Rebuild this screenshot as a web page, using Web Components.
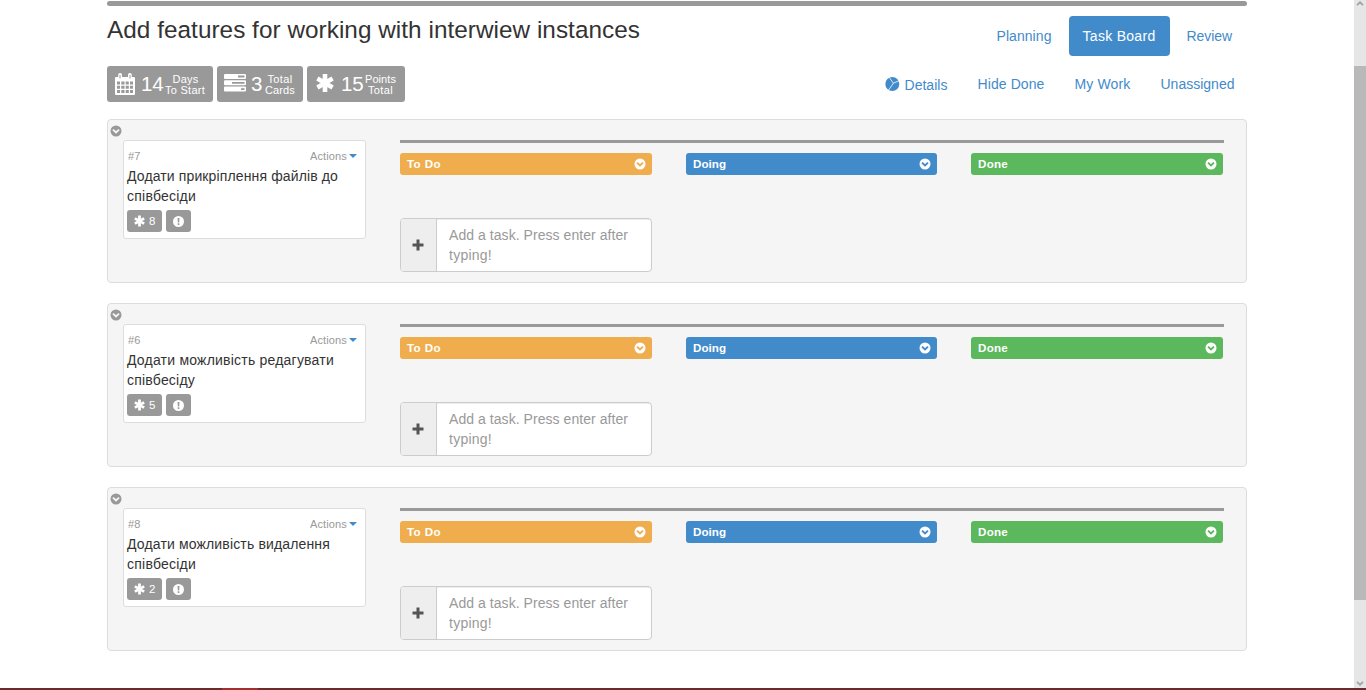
<!DOCTYPE html>
<html lang="uk">
<head>
<meta charset="utf-8">
<title>Task Board</title>
<style>
html,body{margin:0;padding:0;height:690px;overflow:hidden;background:#fff}
body{font:14px/20px "Liberation Sans",Arial,sans-serif;color:#333}
</style>
</head>
<body>
<task-app></task-app>
<script>
const define = (name, html, setup) => customElements.define(name, class extends HTMLElement {
  connectedCallback() {
    if (this.shadowRoot) return;
    this.attachShadow({mode: 'open'}).innerHTML = typeof html === 'function' ? html(this) : html;
    if (setup) setup(this);
  }
});

// Tracks its text to a given line width.
define('fit-text', '<style>:host{display:inline-block;white-space:pre;vertical-align:top}</style><slot></slot>', el => {
  const want = +el.getAttribute('w');
  const natural = el.getBoundingClientRect().width;
  const n = el.textContent.length;
  el.style.letterSpacing = ((want - natural) / n).toFixed(3) + 'px';
  el.style.width = want + 'px';
});

const icons = {
  calendar: ['20 22', '<path fill="#fff" d="M1 4h2.2V2a1.9 1.9 0 0 1 3.8 0v2h6V2a1.9 1.9 0 0 1 3.8 0v2H19q1 0 1 1v16q0 1-1 1H1q-1 0-1-1V5q0-1 1-1z"/><path stroke="#999" stroke-width="1" fill="none" d="M5 2v3.5M15 2v3.5"/><path fill="#999" d="M2 8.5h3v3H2zm4.3 0h3.2v3H6.3zm4.4 0h3.1v3h-3.1zm4.3 0h3v3h-3zM2 12.7h3v3H2zm4.3 0h3.2v3H6.3zm4.4 0h3.1v3h-3.1zm4.3 0h3v3h-3zM2 17h3v3H2zm4.3 0h3.2v3H6.3zm4.4 0h3.1v3h-3.1zm4.3 0h3v3h-3z"/>'],
  tasks: ['22 18', '<path fill="#fff" d="M1 0h20q1 0 1 1v3q0 1-1 1H1q-1 0-1-1V1q0-1 1-1zM1 6.3h20q1 0 1 1v3q0 1-1 1H1q-1 0-1-1v-3q0-1 1-1zM1 12.6h20q1 0 1 1v3q0 1-1 1H1q-1 0-1-1v-3q0-1 1-1z"/><path fill="#999" d="M14 1.6h6.5v1.8H14zM8 7.9h12.5v1.8H8zM17 14.2h3.5V16H17z"/>'],
  asterisk: ['18 20', '<path stroke="currentColor" stroke-width="4.6" fill="none" stroke-linejoin="round" d="M9 1v18M1.4 5.6l15.2 8.8M16.6 5.6L1.4 14.4"/>'],
  chevron: ['12 12', '<circle cx="6" cy="6" r="5.5" fill="currentColor"/><path d="M3 4.6L6 7.4l3-2.8" fill="none" stroke="var(--cut)" stroke-width="1.9"/>'],
  alert: ['12 12', '<circle cx="6" cy="6" r="6" fill="currentColor"/><path d="M4.9 2.2h2.2L6.7 7H5.3zM5.1 8h1.8v1.7H5.1z" fill="#999"/>'],
  plus: ['12 12', '<path d="M4.5.5h3v4h4v3h-4v4h-3v-4h-4v-3h4z" fill="currentColor"/>'],
  pie: ['16 16', '<circle cx="8.3" cy="8" r="7" fill="#428bca"/><path d="M4.6.5L9.4 7.2L15.3 4.6M9.4 7.2L4.6 14" stroke="#fff" stroke-width=".8" fill="none"/>'],
  caret: ['8 4', '<path d="M0 0h8L4 4z" fill="#428bca"/>']
};
define('board-icon', el => {
  const [box, body] = icons[el.getAttribute('name')];
  return `<style>:host{display:block;flex:none}svg{display:block;width:100%;height:100%}</style><svg viewBox="0 0 ${box}" preserveAspectRatio="none">${body}</svg>`;
});

define('stat-badge', `<style>
:host{display:flex;box-sizing:border-box;height:36px;background:#999;border-radius:3px;color:#fff}
.n{font-size:20.5px;line-height:24px;padding-top:6px}
.l{font-size:11px;line-height:11px;padding-top:8px;text-align:center;display:flex;flex-direction:column;align-items:center}
</style><slot name="icon"></slot><div class="n"><slot name="number"></slot></div><div class="l"><slot></slot></div>`);

define('nav-link', `<style>
:host{display:flex;align-items:center;box-sizing:border-box;height:40px;padding:0 14px;color:#428bca;border-radius:4px}
:host([active]){background:#428bca;color:#fff}
</style><slot></slot>`);

define('column-head', `<style>
:host{display:flex;align-items:center;justify-content:space-between;box-sizing:border-box;height:22px;padding:0 6px 0 7px;border-radius:3px;background:var(--cut);color:#fff;font-weight:bold;font-size:11.6px;line-height:22px}
board-icon{width:12px;height:12px}
</style><slot></slot><board-icon name="chevron"></board-icon>`);

define('task-input', `<style>
:host{display:flex;box-sizing:border-box;width:252px;height:54px;border:1px solid #ccc;border-radius:4px;background:#fff;overflow:hidden;color:#999}
.a{width:35px;border-right:1px solid #ccc;background:#eee;color:#555;display:flex;align-items:center;justify-content:center}
board-icon{width:12px;height:12px;margin-right:1px}
.t{flex:1;padding:6px 12px;box-shadow:inset 0 1px 1px rgba(0,0,0,.075)}
</style><div class="a"><board-icon name="plus"></board-icon></div><div class="t"><fit-text w="179">Add a task. Press enter after</fit-text><br><fit-text w="43">typing!</fit-text></div>`);

define('story-card', el => `<style>
:host{display:block;box-sizing:border-box;width:243px;height:99px;border:1px solid #ddd;border-radius:3px;background:#fff;padding:5px 8px 0 3px}
.top{display:flex;align-items:center;height:20px;color:#999;font-size:11px;padding-left:1px}
.act{margin-left:auto;margin-right:2px}
.top board-icon{width:8px;height:4px}
.title{height:40px}
.b{display:flex;gap:4px;margin-top:4px}
.b div{display:flex;align-items:center;box-sizing:border-box;height:22px;background:#999;border-radius:3px;color:#fff;font-size:11.5px;padding:0 7px}
.s board-icon{width:11px;height:12px;margin-right:4px}
.p board-icon{width:11px;height:11px}
</style>
<div class="top"><fit-text w="12.5">#${el.getAttribute('num')}</fit-text><fit-text class="act" w="37">Actions</fit-text><board-icon name="caret"></board-icon></div>
<div class="title"><slot></slot></div>
<div class="b"><div class="s"><board-icon name="asterisk"></board-icon><fit-text w="6">${el.getAttribute('points')}</fit-text></div><div class="p"><board-icon name="alert"></board-icon></div></div>`);

define('story-row', `<style>
:host{display:flex;box-sizing:border-box;height:164px;border:1px solid #ddd;border-radius:4px;background:#f5f5f5;color:#333}
.fold{width:12px;height:12px;margin:5px 1px 0 2px;color:#999;--cut:#f5f5f5}
.card{padding-top:20px}
.cols{margin:20px 0 0 34px;width:824px}
.line{height:3px;background:#999;margin-bottom:10px}
.heads{display:grid;grid-template-columns:252px 251px 252px;column-gap:34px}
task-input{margin-top:43px}
</style><board-icon class="fold" name="chevron"></board-icon><div class="card"><slot></slot></div>
<div class="cols"><div class="line"></div><div class="heads">
<column-head style="--cut:#f0ad4e"><fit-text w="34">To Do</fit-text></column-head>
<column-head style="--cut:#428bca"><fit-text w="33">Doing</fit-text></column-head>
<column-head style="--cut:#5cb85c"><fit-text w="30">Done</fit-text></column-head>
</div><task-input></task-input></div>`);

define('scroll-track', `<style>
:host{display:flex;flex-direction:column;align-items:center;width:12px;background:#e6e6e6}
svg{display:block;width:8px;height:5px}
.up{margin-top:1px}.thumb{width:12px;height:534px;background:#b9b9b9;margin-top:60px}.down{margin-top:auto;margin-bottom:2px}
path{fill:none;stroke:#a3a3a3;stroke-width:1.8}
</style><svg class="up" viewBox="0 0 8 5"><path d="M1 4.2l3-2.9 3 2.9"/></svg><div class="thumb"></div><svg class="down" viewBox="0 0 8 5"><path d="M1 .8l3 2.9L7 .8"/></svg>`);

define('task-app', `<style>
:host{display:flex;flex-direction:column;height:690px;width:1366px}
.view{display:flex;height:688px}
main{width:1140px;margin:0 107px}
.bar{height:5px;background:#999;border-radius:3px;margin-top:1px}
header{display:flex;justify-content:space-between;height:113px}
.title{font-size:24.3px;line-height:26px;padding-top:11px;height:49px}
.stats{display:flex;gap:4px}
nav{display:flex;justify-content:flex-end}
nav.one{padding-top:10px;gap:3px}
nav.two{padding-top:8px;gap:2px}
.rows{display:flex;flex-direction:column;gap:20px}
.strip{display:flex;height:2px;background:#6b2b2d}
.strip i{width:36px;margin-left:222px;background:#a13031}
</style>
<div class="view"><main><div class="bar"></div>
<header><div><div class="title"><fit-text w="533">Add features for working with interwiew instances</fit-text></div>
<div class="stats">
<stat-badge style="width:106px"><board-icon slot="icon" name="calendar" style="width:20px;height:22px;margin:7px 6px 0 8px"></board-icon><fit-text slot="number" w="22.5" style="margin-right:1.5px">14</fit-text><fit-text w="26" style="margin-left:1px">Days</fit-text><fit-text w="40">To Start</fit-text></stat-badge>
<stat-badge style="width:86px"><board-icon slot="icon" name="tasks" style="width:22px;height:18px;margin:8px 5px 0 7px"></board-icon><fit-text slot="number" w="11.5" style="margin-right:2.5px">3</fit-text><fit-text w="25">Total</fit-text><fit-text w="30">Cards</fit-text></stat-badge>
<stat-badge style="width:98px"><board-icon slot="icon" name="asterisk" style="width:18px;height:20px;margin:7px 7px 0 9px"></board-icon><fit-text slot="number" w="22.5" style="margin-right:1.5px">15</fit-text><fit-text w="31">Points</fit-text><fit-text w="25">Total</fit-text></stat-badge>
</div></div>
<div><nav class="one"><nav-link><fit-text w="55">Planning</fit-text></nav-link><nav-link active><fit-text w="73">Task Board</fit-text></nav-link><nav-link style="padding-right:15px"><fit-text w="45.5">Review</fit-text></nav-link></nav>
<nav class="two"><nav-link><board-icon name="pie" style="width:16px;height:16px;margin-right:5px"></board-icon><fit-text w="43" style="margin-top:2px">Details</fit-text></nav-link><nav-link><fit-text w="67">Hide Done</fit-text></nav-link><nav-link><fit-text w="56">My Work</fit-text></nav-link><nav-link style="padding-right:12.5px"><fit-text w="74">Unassigned</fit-text></nav-link></nav></div>
</header>
<div class="rows">
<story-row><story-card num="7" points="8"><fit-text w="211">Додати прикріплення файлів до</fit-text><br><fit-text w="69">співбесіди</fit-text></story-card></story-row>
<story-row><story-card num="6" points="5"><fit-text w="207">Додати можливість редагувати</fit-text><br><fit-text w="68">співбесіду</fit-text></story-card></story-row>
<story-row><story-card num="8" points="2"><fit-text w="203">Додати можливість видалення</fit-text><br><fit-text w="69">співбесіди</fit-text></story-card></story-row>
</div></main><scroll-track></scroll-track></div>
<div class="strip"><i></i></div>`);
</script>
</body>
</html>
